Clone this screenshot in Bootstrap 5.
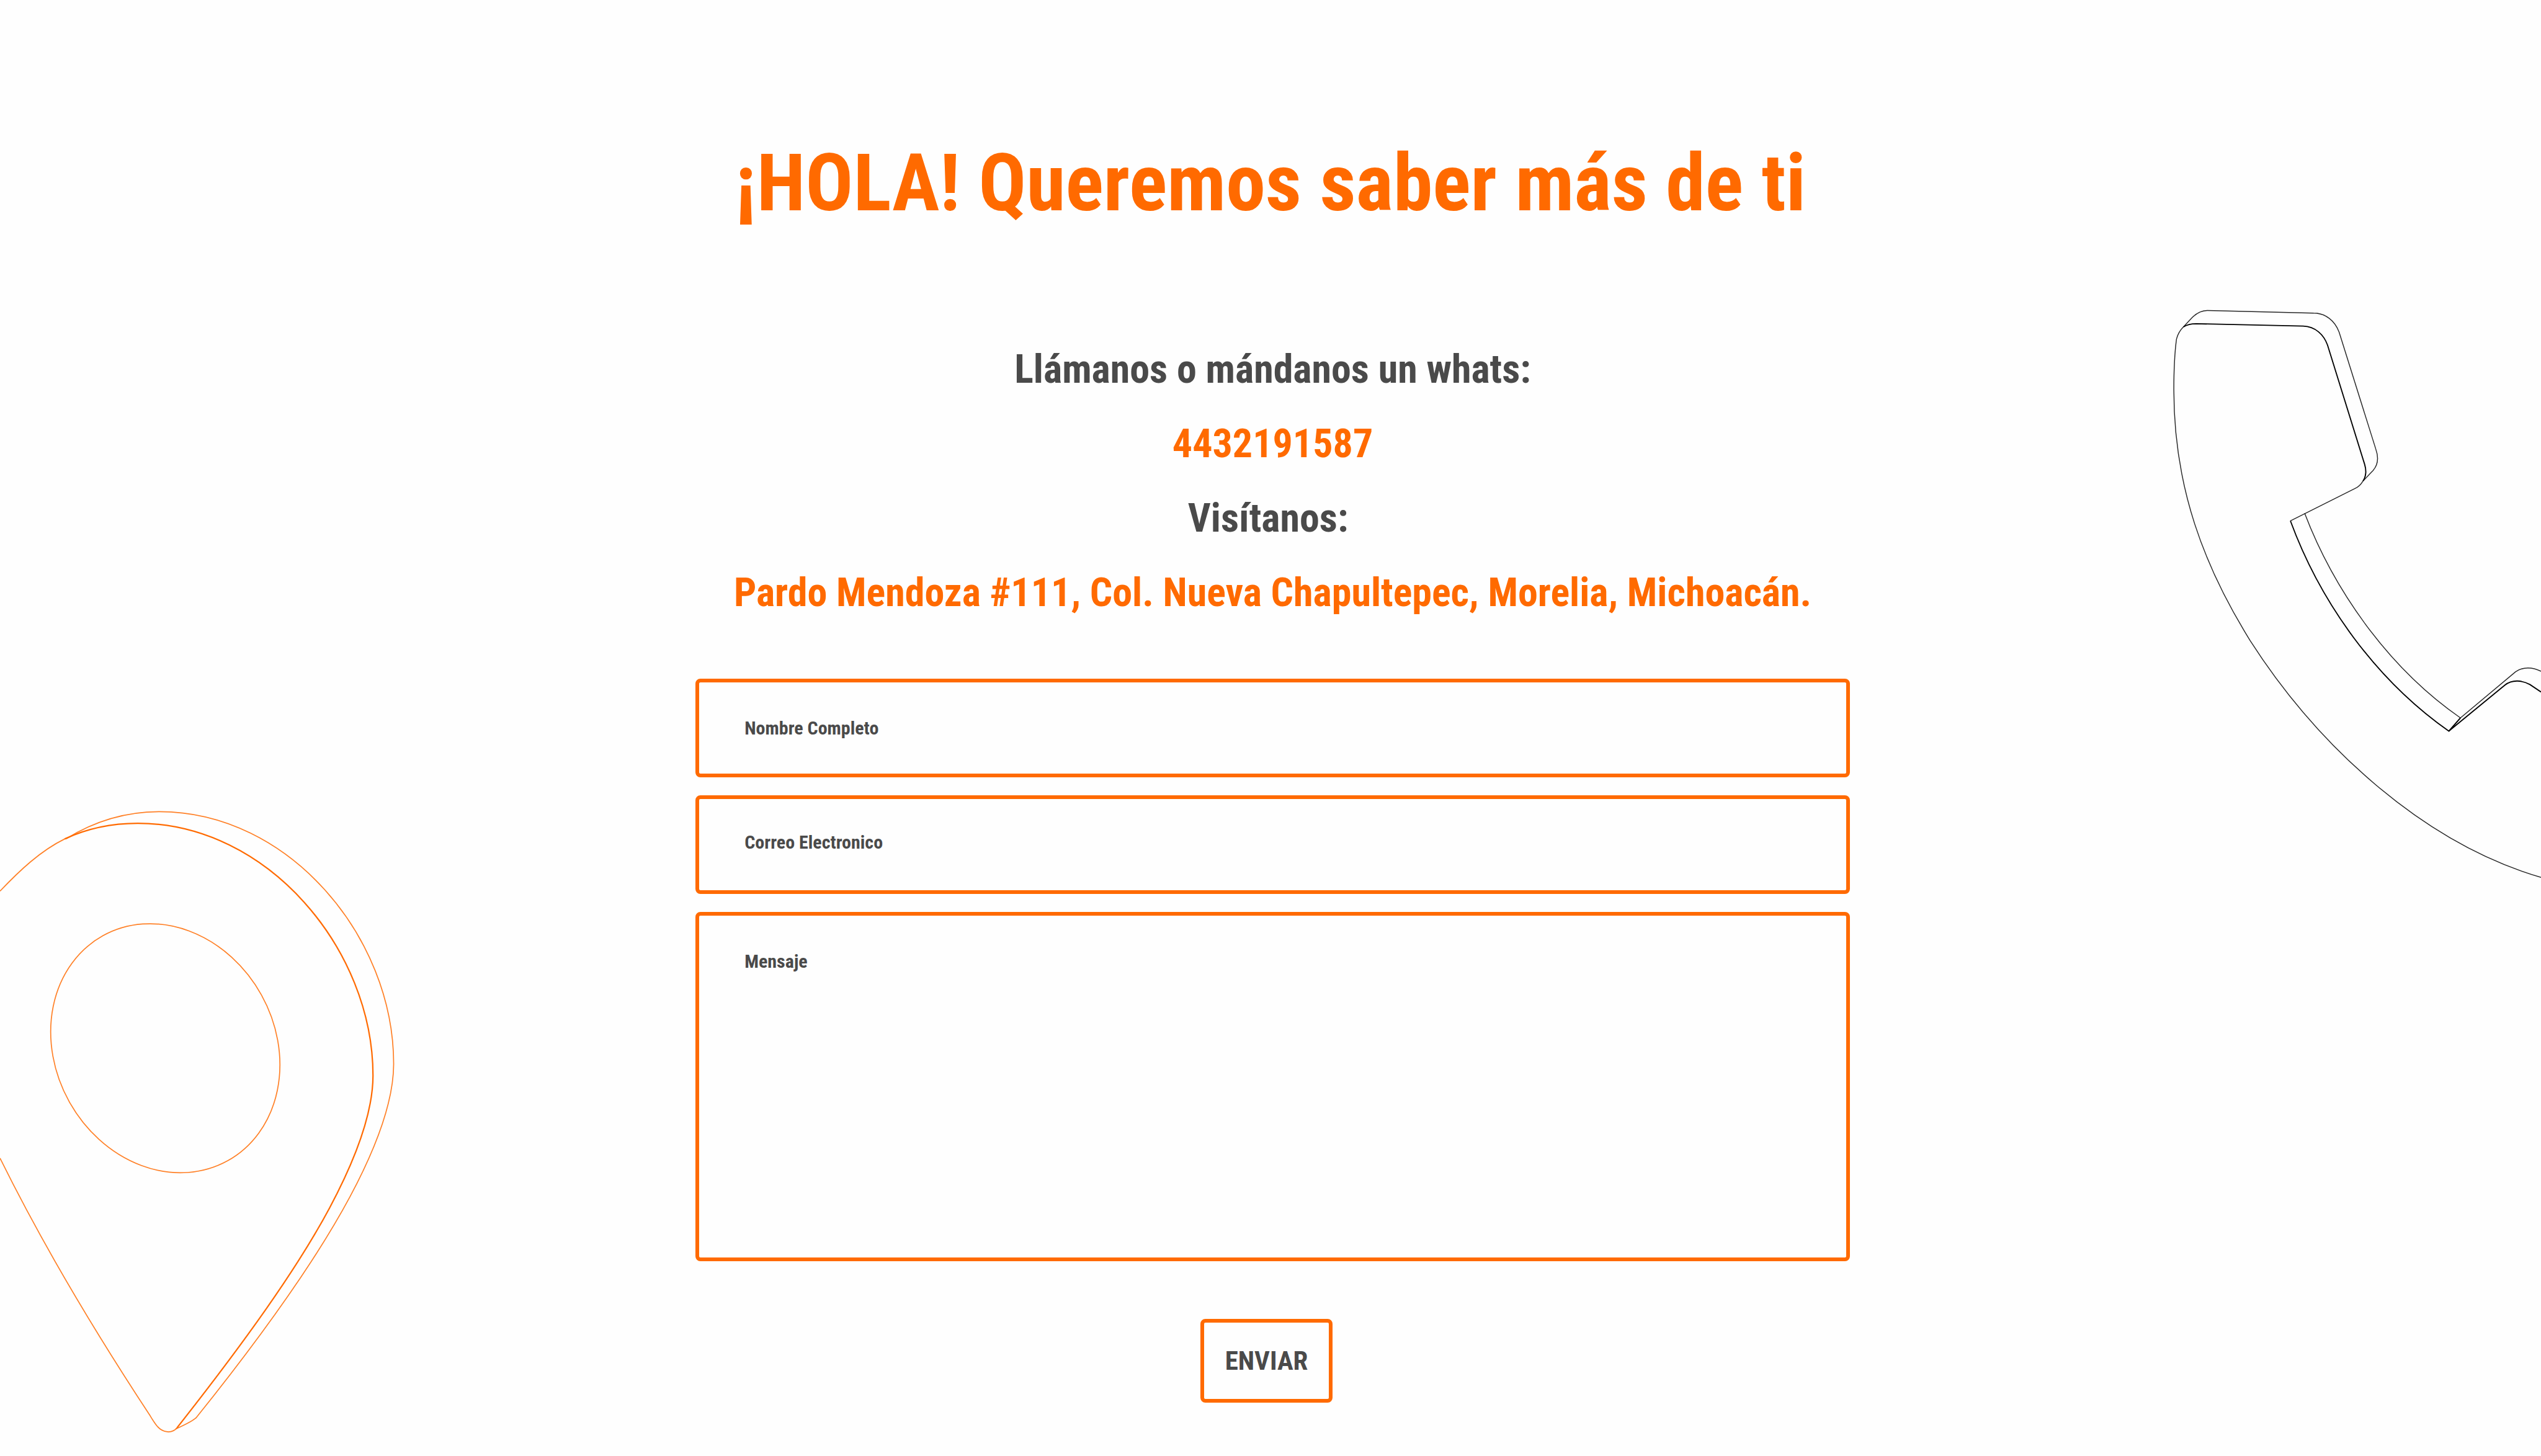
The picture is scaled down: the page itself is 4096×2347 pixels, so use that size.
<!DOCTYPE html>
<html lang="es">
<head>
<meta charset="utf-8">
<meta name="viewport" content="width=device-width, initial-scale=1">
<title>Contacto</title>
<link href="https://cdn.jsdelivr.net/npm/bootstrap@5.3.0/dist/css/bootstrap.min.css" rel="stylesheet">
<style>
  :root { --brand: #ff6a00; --ink: #4a4a4a; }
  body { background: #fefefe; color: var(--ink); font-family: "Roboto Condensed", Roboto, sans-serif; font-weight: 700; }
  .contact-page { min-height: 100vh; padding-top: 220px; }
  .contact-title { color: var(--brand); font-size: 128px; line-height: 150px; font-weight: 700; margin-bottom: 166px; }
  .contact-body { padding-left: 7px; }
  .contact-info { font-size: 64px; line-height: 120px; margin-bottom: 78px; }
  .contact-info a, .contact-info address { color: var(--brand); line-height: inherit; }
  .contact-form { width: 45.5%; gap: 29px; }
  .contact-field, .contact-field:focus {
    background: transparent; color: var(--ink); border: 6px solid var(--brand); border-radius: 8px;
    font-size: 30px; line-height: 40px; font-weight: 700; padding: 0 73px; height: 159px; box-shadow: none;
  }
  .contact-message, .contact-message:focus { height: 563px; padding-top: 60px; resize: none; }
  .contact-label { top: 60px; left: 79px; font-size: 30px; line-height: 40px; pointer-events: none; }
  .contact-email .contact-label { top: 56px; }
  .contact-field:focus + .contact-label, .contact-field:not(:placeholder-shown) + .contact-label { opacity: 0; }
  .contact-actions { margin-top: 64px; padding-right: 20px; }
  .contact-send { border: 6px solid var(--brand); border-radius: 8px; color: var(--ink); font-size: 43px; line-height: 63px; font-weight: 700; padding: 30px 34px; }
  .contact-art { z-index: -1; fill: none; stroke-width: 2; pointer-events: none; }
  .art-pin { stroke: var(--brand); stroke-opacity: .85; }
  .art-phone { stroke: #000; stroke-opacity: .85; stroke-width: 1.7; }
  .art-pin .art-bold { stroke-width: 2.6; stroke-opacity: 1; }
  .art-phone .art-bold { stroke-width: 2.2; stroke-opacity: 1; }
</style>
<script src="https://cdn.jsdelivr.net/npm/bootstrap@5.3.0/dist/js/bootstrap.bundle.min.js"></script>
</head>
<body>
<main class="contact-page position-relative overflow-hidden z-0">
  <svg class="contact-art position-absolute top-0 start-0 w-100 h-100" viewBox="0 0 4796 2748" preserveAspectRatio="xMidYMin meet" aria-hidden="true">
    <g class="art-pin">
      <path d="M0 1682C36 1644 76 1606 122 1583.500"/>
      <path class="art-bold" d="M122 1583.500C166 1563 212 1554 260 1554C505 1554 704 1792 704 2030C704 2100 670 2190 622 2280C560 2396 460 2535 334 2695"/>
      <path d="M334 2695C325 2706 307 2705 296 2691C291 2685 287 2678 282 2670C180 2515 82 2352 0 2186"/>
      <path d="M125 1583C180 1549 240 1532 301 1532C545 1532 743 1768 743 2008C743 2078 709 2168 661 2258C599 2374 505 2508 371 2675C362 2684 350 2688 332 2697"/>
      <ellipse rx="242.800" ry="207.500" transform="translate(312 1978.500) rotate(61)"/>
    </g>
    <g class="art-phone">
      <path d="M4796 1656C4570 1590 4372 1404 4247 1209C4160 1069 4103 920 4103 736C4103 705 4104 670 4108 640C4110 632 4115 623 4121 617"/>
      <path class="art-bold" d="M4121 617C4129 612 4136 611 4145 611L4347 615.500C4370 616 4386 632 4393 651L4463 876C4467 889 4466 899 4460 908"/>
      <path d="M4460 908C4456 915 4452 919 4445 922L4323 983"/>
      <path d="M4121 617L4138 599C4147 590 4155 586 4167 586L4367 591C4389 591 4407 605 4415 627L4484 847C4490 864 4488 878 4479 888L4460 908"/>
      <path class="art-bold" d="M4323 983C4380 1138 4485 1284 4622 1380L4728 1293C4742 1282 4760 1284 4775 1292L4796 1306"/>
      <path d="M4350 969C4405 1113 4507 1260 4644 1355"/>
      <path class="art-bold" d="M4622 1380L4644 1355"/>
      <path d="M4622 1380L4644 1355L4748 1268C4762 1258 4780 1259 4796 1267"/>
    </g>
  </svg>

  <h1 class="contact-title text-center">¡HOLA! Queremos saber más de ti</h1>

  <div class="contact-body d-flex flex-column align-items-center">
    <div class="contact-info text-center">
      <p class="mb-0">Llámanos o mándanos un whats:</p>
      <p class="mb-0"><a class="text-decoration-none" href="tel:4432191587">4432191587</a></p>
      <p class="mb-0">Visítanos:&nbsp;</p>
      <address class="mb-0">Pardo Mendoza #111, Col. Nueva Chapultepec, Morelia, Michoacán.</address>
    </div>

    <form class="contact-form d-flex flex-column">
      <div class="position-relative">
        <input class="form-control contact-field" id="nombre" type="text" placeholder=" ">
        <label class="contact-label position-absolute" for="nombre">Nombre Completo</label>
      </div>
      <div class="position-relative contact-email">
        <input class="form-control contact-field" id="correo" type="email" placeholder=" ">
        <label class="contact-label position-absolute" for="correo">Correo Electronico</label>
      </div>
      <div class="position-relative">
        <textarea class="form-control contact-field contact-message d-block" id="mensaje" placeholder=" "></textarea>
        <label class="contact-label position-absolute" for="mensaje">Mensaje</label>
      </div>
      <div class="contact-actions d-flex justify-content-center">
        <button class="btn contact-send" type="submit">ENVIAR</button>
      </div>
    </form>
  </div>
</main>
</body>
</html>
